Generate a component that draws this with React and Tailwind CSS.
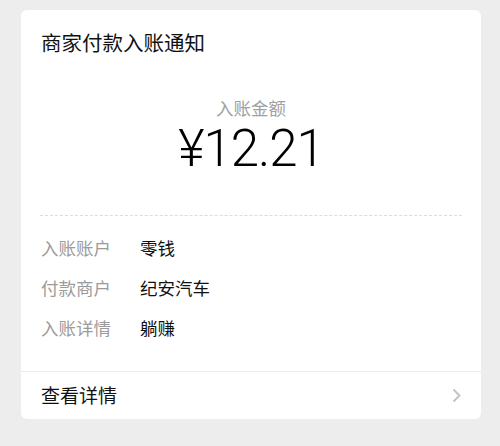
import React from 'react';

const rows = [
  { label: '入账账户', value: '零钱' },
  { label: '付款商户', value: '纪安汽车' },
  { label: '入账详情', value: '躺赚' },
];

const cjk = "font-['Noto_Sans_CJK_SC',sans-serif]";

export default function App() {
  return (
    <div className={`min-h-[446px] bg-[#ededed] px-[21px] pt-[10px] ${cjk}`}>
      <div className="w-[460px] rounded-md bg-white">
        <div className="flex h-[64px] items-center px-5 text-[20.5px] text-[#111]">
          商家付款入账通知
        </div>

        <div className="mt-[22px] text-center text-[17.5px] leading-[24px] text-[#a0a0a0]">入账金额</div>
        <div className="mt-[1px] text-center font-['Roboto',sans-serif] text-[51px] font-light leading-[56px] tracking-[-1px] text-black">
          ¥12.21
        </div>

        <div className="mx-[19px] mt-[38px] border-t border-dashed border-[#dcdcdc]" />

        <div className="mt-[12px] mb-[23px] px-5">
          {rows.map((r) => (
            <div key={r.label} className="flex h-10 items-center text-[17.5px]">
              <span className="w-[99px] text-[#9b9b9b]">{r.label}</span>
              <span className="text-[#111]">{r.value}</span>
            </div>
          ))}
        </div>

        <div className="flex h-[48px] items-center justify-between border-t border-[#ececec] pl-5 pr-[20px]">
          <span className="text-[19px] text-[#111]">查看详情</span>
          <svg width="9" height="15" viewBox="0 0 9 15" fill="none">
            <path d="M1.5 1.5 L7.5 7.5 L1.5 13.5" stroke="#c4c4c4" strokeWidth="2" />
          </svg>
        </div>
      </div>
    </div>
  );
}
